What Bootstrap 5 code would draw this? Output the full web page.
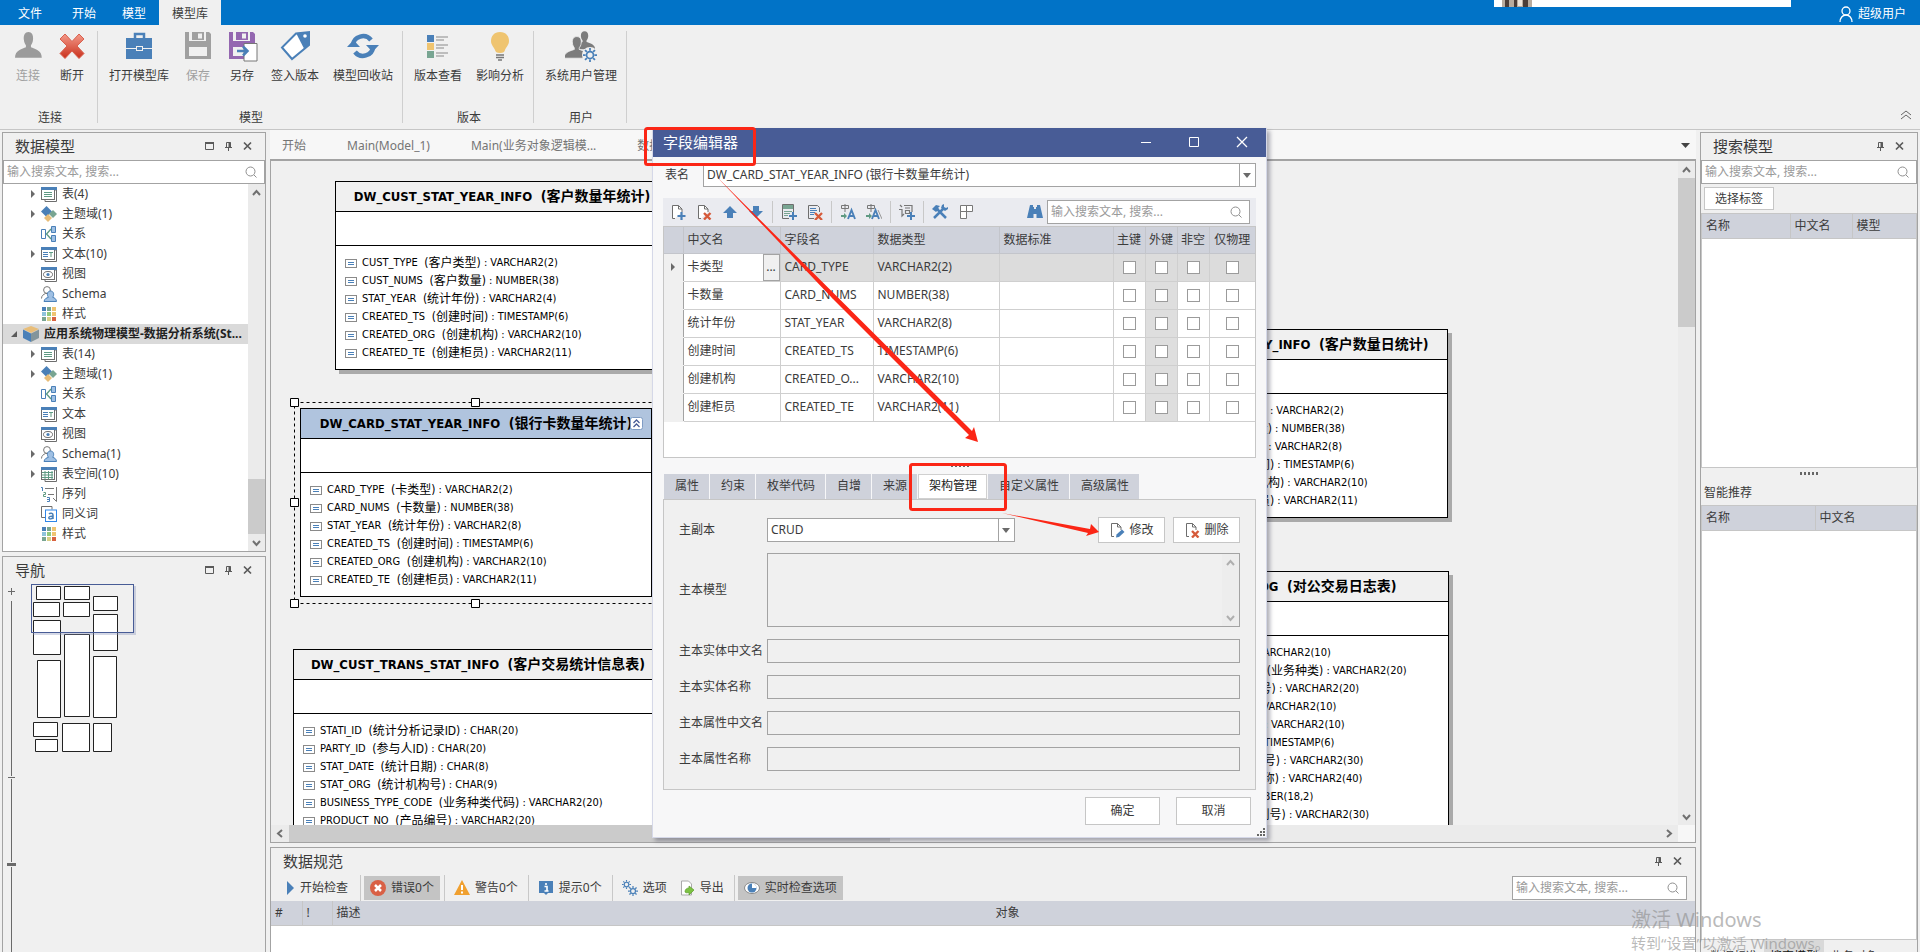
<!DOCTYPE html>
<html lang="zh-CN">
<head>
<meta charset="utf-8">
<meta name="viewport" content="width=device-width, initial-scale=1">
<title>字段编辑器</title>
<link href="https://cdn.jsdelivr.net/npm/bootstrap@5.3.0/dist/css/bootstrap.min.css" rel="stylesheet">
<style>
:root{--line:#a3a3a3;--soft:#c6c6c6;--head:#cfd2db;--face:#f0f0f0;--ink:#3b3b3b;--blue:#4a80b8;}
html,body{height:100%}
body{font-family:"Noto Sans","Noto Sans CJK SC",sans-serif;font-size:12px;line-height:18px;color:var(--ink);background:var(--face);overflow:hidden;position:relative}
button,input,select,textarea{font:inherit;color:inherit;border-radius:0}
svg{display:block;flex:none}
a{color:inherit;text-decoration:none}
.ico16{width:16px;height:16px}
/* title strip and ribbon */
.topbar{height:25px;background:#0173c7;color:#fff}
.topbar .menu-tab{padding:5px 13px 2px}
.topbar .menu-tab.active{background:var(--face);color:var(--ink)}
.menu-first{padding-left:18px!important;padding-right:17px!important}
.float-strip{left:1494px;top:0;width:297px;height:7px;background:#fff}
.topbar .account{padding:2px 14px 0 0}
.ribbon{height:105px;border-bottom:1px solid var(--soft)}
.rib-group{padding:0 3px 0 4px;position:relative}
.rib-group:first-child{padding:0 4px 0 6px}
.rib-group::after{content:"";position:absolute;right:0;top:6px;bottom:6px;width:1px;background:#cfcfcf}
.rib-btn{border:0;background:none;padding:5px 7px 0;min-width:44px;height:67px;white-space:nowrap;display:flex;flex-direction:column;align-items:center}
.rib-btn svg{width:32px;height:32px;margin:0 -1px 5px}
.rib-btn:disabled{color:#a0a0a0}
.rib-cap{text-align:center;padding-top:17px}
/* docked panels */
.side-left{width:264px}
.side-right{width:218px}
.dock{border:1px solid var(--line);background:var(--face)}
.dock-title{height:27px;font-size:15px;padding:0 12px 2px}
.dock-title svg{width:19px;height:12px}
.find{height:24px;border:1px solid var(--line);background:#fff;padding:0 7px 0 3px}
.find input{border:0;outline:0;background:none;min-width:0;flex:1;padding:0}
.find input::placeholder{color:#9a9a9a;opacity:1}
.tree{background:#fff;padding:0;margin:0;list-style:none;height:367px}
.tree li{height:20px;padding-left:21px;display:flex;align-items:center;white-space:nowrap;overflow:hidden}
.tree li .twist{width:14px;height:10px;margin-right:3px}
.tree li svg.ico16{margin-right:5px}
.tree li.root{background:#dadada;font-weight:700;padding-left:3px;color:#222}
.vbar{width:17px;background:#ebebeb;display:flex;flex-direction:column}
.vbar .arrow{width:17px;height:17px}
.thumb{background:#cbcbcb}
/* documents */
.doc-tabs{height:31px;background:#f7f7f7;border-bottom:2px solid var(--line);padding-right:4px;overflow:hidden}
.doc-tabs a{padding:7px 29px 0 12px;color:#757575;white-space:nowrap}
.canvas{border:1px solid var(--line);border-top:0}
.stage{position:relative;overflow:hidden;color:#000}
.entity{position:absolute;border:1px solid #000;background:#fff;box-shadow:4px 4px 0 #aaa;font-family:"DejaVu Sans Condensed","Noto Sans CJK SC",sans-serif;font-size:11px;white-space:nowrap}
.entity h6{font-family:"DejaVu Sans Condensed","Noto Sans CJK SC",sans-serif;margin:0;height:30px;line-height:29px;font-size:13px;font-weight:700;text-align:center;background:var(--face);border-bottom:1px solid #000}
.entity .keys{height:34px;border-bottom:1px solid #000}
.entity ul{list-style:none;margin:0;padding:8px 0 7px 9px}
.entity li{height:18px;line-height:18px;display:flex;align-items:center;white-space:pre}
.entity li::before{content:"";width:12px;height:9px;margin-right:5px;border:1px solid #8a8a8a;background:linear-gradient(#fff 2px,var(--blue) 2px 3px,#fff 3px 4px,var(--blue) 4px 5px,#fff 5px) center/6px 7px no-repeat #fff}
.entity h6 .cn{font-size:14px}
.entity li .cn{font-size:12px}
.entity.chosen{box-shadow:none}
.entity.chosen h6{background:#b0c4de}
.collapse-mark{position:absolute;right:8px;top:8px}
.hbar{height:17px;background:#ebebeb}
/* bottom panel */
.tool-sep{width:1px;align-self:stretch;background:#c8c8c8}
.rules .tool-sep{margin:0 3px 0 4px}
.chk{border:0;background:none;height:24px;padding:0 6px;display:flex;align-items:center;gap:5px;white-space:nowrap}
.chk.on{background:#c4c4c4}
table.plain{width:100%;table-layout:fixed;border-collapse:collapse}
table.plain th{font-weight:400;height:24px;padding:0 4px;background:var(--head);border-right:1px solid var(--soft);border-bottom:1px solid var(--soft)}
table.plain th:last-child{border-right:0}
table.plain th.open{border-right:0}
.list-box{background:#fff;border:1px solid var(--soft)}
.foot-tabs{height:12px;overflow:hidden;padding-left:3px}
.foot-tabs a{padding:8px 6px 0;white-space:nowrap}
.foot-tabs a.active{background:#d9d9d9;color:#111}
/* field editor window */
.editor{position:absolute;left:652px;top:128px;width:615px;background:#f7f7f8;border:1px solid #d5d8e8;border-top:0;box-shadow:3px 3px 4px rgba(60,60,80,.4)}
.editor-title{height:29px;background:#485c96;color:#fff;font-size:15px;padding:0 0 2px 10px}
.editor-title button{border:0;background:none;color:#fff;width:48px;height:27px;padding:0;display:flex;align-items:center;justify-content:center}
.editor-main{padding:6px 10px 12px}
.table-pick{margin-bottom:11px}
.pick{height:24px;border:1px solid var(--line);background:#fff;position:relative}
.pick select{appearance:none;border:0;outline:0;background:none;width:100%;height:22px;padding:0 20px 0 3px;display:block}
.pick::after{content:"";position:absolute;right:4px;top:9px;border:4px solid transparent;border-top:5px solid #6a6a6a;border-bottom:0}
.pick::before{content:"";position:absolute;right:15px;top:0;bottom:0;width:1px;background:var(--line)}
.editor-tools{height:28px;background:#eaebf0;padding:0 6px 0 2px}
.editor-tools button{border:0;background:none;padding:0;width:26px;height:28px;display:flex;align-items:center;justify-content:center}
.editor-tools .tool-sep{margin:3px 3px 3px}
.grid-box{border:1px solid var(--soft);background:#fff;padding-bottom:35px}
.fields{width:100%;table-layout:fixed;border-collapse:collapse}
.fields th,.fields td{height:28px;padding:0 4px;border:1px solid #cfcfcf;border-top:0;white-space:nowrap;overflow:hidden}
.fields th{height:26px;background:var(--head);font-weight:400;border-color:#c3c5cb}
.fields th:first-child,.fields td:first-child{border-left:0}
.fields th:last-child,.fields td:last-child{border-right:0}
.fields td:first-child{background:var(--face);border-bottom-color:var(--face);border-right-color:var(--line);padding:0}
.fields tr.now td:not(:first-child){background:#dcdcdc}
.fields tr.now td.edit{background:#fff!important}
.fields td:nth-child(7){background:#dedede}
.fields td:nth-child(n+6){text-align:center;padding:0}
.fields th:nth-child(n+6){padding:0;text-align:center}
.fields input{appearance:none;width:13px;height:13px;border:1px solid #9b9b9b;background:#fff;margin:0;display:inline-block;vertical-align:middle}
.more{border:1px solid var(--line);background:var(--face);width:17px;height:27px;padding:0;line-height:12px;margin-right:-4px}
.dots{width:18px;height:3px;background:repeating-linear-gradient(90deg,#666 0 2px,transparent 2px 4px)}
.pages{padding-left:1px}
.pages button{border:0;border-right:1px solid #f7f7f8;background:var(--head);height:25px;padding:0 10px 0 11px;margin:0}
.pages button.active{background:#fff;box-shadow:inset 0 0 0 1px #d0d0d0;color:#222}
.page-body{border:1px solid var(--soft);background:var(--face);padding:17px 15px 18px}
.form-line{margin-bottom:12px}
.form-line:first-child{margin-bottom:10px}
.form-line>label{width:88px;flex:none;white-space:nowrap}
.ro{height:24px;width:100%;border:1px solid var(--line);background:var(--face)}
.flat{border:1px solid var(--soft);background:#fff;padding:0;white-space:nowrap;display:inline-flex;align-items:center;justify-content:center}
.notes{position:absolute;left:0;top:0;pointer-events:none}
.watermark{position:absolute;left:1631px;top:906px;color:rgba(140,140,140,.6);pointer-events:none;white-space:nowrap}
.watermark div:first-child{font-size:20px;line-height:28px}
.watermark div:last-child{font-size:15px;line-height:18px}
</style>
</head>
<body class="d-flex flex-column">

<svg width="0" height="0" class="position-absolute" aria-hidden="true">
<defs>
<symbol id="i-lens" viewBox="0 0 12 12"><circle cx="5.5" cy="5.5" r="4.5" fill="none" stroke="#8f8f8f"/><path d="M9 9l2.500 2.500" stroke="#8f8f8f"/></symbol>
<symbol id="i-max" viewBox="0 0 19 12"><path d="M5.500 2.500h8v7h-8z" fill="none" stroke="#5a5a5a"/><path d="M5 3h9" stroke="#5a5a5a" stroke-width="2"/></symbol>
<symbol id="i-pin" viewBox="0 0 19 12"><path d="M7.500 2.500h4v5h-4zM6 7.500h7M9.500 8v3" fill="none" stroke="#5a5a5a"/><path d="M10.500 2v5" stroke="#5a5a5a" stroke-width="2"/></symbol>
<symbol id="i-x" viewBox="0 0 19 12"><path d="M6 2.500l7 7M13 2.500l-7 7" stroke="#5a5a5a" stroke-width="1.700"/></symbol>
<symbol id="i-tri" viewBox="0 0 14 10"><path d="M7 1l4 4-4 4z" fill="#6a6a6a"/></symbol>
<symbol id="i-open" viewBox="0 0 14 10"><path d="M11 2v6H5z" fill="#5a5a5a"/></symbol>
<symbol id="a-up" viewBox="0 0 17 17"><path d="M5 11l3.500-4 3.500 4" fill="none" stroke="#707070" stroke-width="2"/></symbol>
<symbol id="a-dn" viewBox="0 0 17 17"><path d="M5 7l3.500 4L12 7" fill="none" stroke="#707070" stroke-width="2"/></symbol>
<symbol id="i-win" viewBox="0 0 16 16"><path d="M13.500 4h2v11.500h-11.500v-2" fill="none" stroke="#6e6e6e"/><rect x=".5" y="2.500" width="13" height="11" fill="#fff" stroke="#6e6e6e"/><path d="M0 1h14v3H0zM13 1h3v3h-3z" fill="#4a80b8"/></symbol>
<symbol id="i-table" viewBox="0 0 16 16"><use href="#i-win"/><path d="M3 6.500h8M3 8.500h8M3 10.500h8" stroke="#5f9a83"/></symbol>
<symbol id="i-text" viewBox="0 0 16 16"><use href="#i-win"/><path d="M2 6.500h5M2 8.500h5M2 10.500h5" stroke="#4a80b8"/><path d="M8 6.500h4M10 6.500V11" stroke="#5f9a83"/></symbol>
<symbol id="i-view" viewBox="0 0 16 16"><use href="#i-win"/><ellipse cx="7" cy="8.500" rx="4.500" ry="3" fill="none" stroke="#6e6e6e"/><circle cx="7" cy="8.500" r="1.600" fill="#4a80b8"/></symbol>
<symbol id="i-space" viewBox="0 0 16 16"><use href="#i-win"/><path d="M1 6.500h11M1 9h11M1 11.500h11M4 5v8.500M7.500 5v8.500M11 5v8.500" stroke="#5f9a83"/></symbol>
<symbol id="i-area" viewBox="0 0 16 16"><path d="M5.500 0l5.500 5.500-5.500 5.500L0 5.500z" fill="#4a80b8"/><path d="M12 4l4 4-4 4-4-4z" fill="#78a592"/><path d="M7 8l4 4-4 4-4-4z" fill="#e8bd78"/></symbol>
<symbol id="i-rel" viewBox="0 0 16 16"><path d="M.5 3.500h4v9h-4z" fill="#fff" stroke="#4a80b8"/><path d="M10.500.5h4v6h-4zM10.500 9.500h4v6h-4z" fill="#9fc0e4" stroke="#4a80b8"/><path d="M10 3L5.500 8l4.500 5" fill="none" stroke="#5f9a83" stroke-width="1.400"/></symbol>
<symbol id="i-user" viewBox="0 0 16 16"><circle cx="6" cy="4" r="3.400" fill="#fff" stroke="#777"/><path d="M.5 12.500c0-3 2-4 4-5h3" fill="none" stroke="#777"/><path d="M3 15.500c.5-3 2.500-3.500 4.500-4.200-2-2.200-1.300-6.300 2-6.300s4 4 2.200 6.300c2 .7 3.600 1.500 3.800 4.200z" fill="#9fc0e4" stroke="#4a80b8"/></symbol>
<symbol id="i-style" viewBox="0 0 16 16"><path d="M1 1h4v4H1z" fill="#4a80b8"/><path d="M6 1h4v4H6z" fill="#78a592"/><path d="M11 1h4v4h-4z" fill="#efc470"/><path d="M1 6h4v4H1z" fill="#8fc3dc"/><path d="M6 6h4v4H6z" fill="#8fc97f"/><path d="M11 6h4v4h-4z" fill="#efc470"/><path d="M1 11h4v4H1z" fill="#78a592"/><path d="M6 11h4v4H6z" fill="#d8cf86"/><path d="M11 11h4v4h-4z" fill="#d9623f"/></symbol>
<symbol id="i-cube" viewBox="0 0 16 16"><path d="M8 0l8 3-8 4-8-4z" fill="#e8bd78"/><path d="M0 3.500l8 4V16l-8-4z" fill="#4a80b8"/><path d="M16 3.500l-8 4V16l8-4z" fill="#83959b"/></symbol>
<symbol id="i-syn" viewBox="0 0 16 16"><path d="M4 11.500H.5V.5H11v3" fill="none" stroke="#6e6e6e"/><rect x="4.500" y="4" width="11" height="11.500" fill="#fff" stroke="#2f86e8"/><path d="M8 8c1-1.200 4-1 4 1v4M12 10.500c-3-.5-4.500.3-4.200 1.500s3 1.300 4.200-.5" fill="none" stroke="#4a80b8" stroke-width="1.500"/></symbol>
<symbol id="i-seq" viewBox="0 0 16 16"><path d="M0 1.500h1.500V5" fill="none" stroke="#4a80b8"/><path d="M2.500 6.500h2v2h-2v2h2.500" fill="none" stroke="#5f9a83"/><path d="M6 11.500h2.500v4H6M6 13.500h2.500" fill="none" stroke="#4a80b8"/><path d="M4 2.500h9M7 8.500h6M15.500 1v14.500L12 12" fill="none" stroke="#777"/></symbol>
<symbol id="i-page" viewBox="0 0 16 16"><path d="M5 14.500H2.500v-13h6l3.500 3.500V8" fill="#fff" stroke="#6e6e6e"/><path d="M8.500 1.500V5H12" fill="none" stroke="#6e6e6e"/></symbol>
<symbol id="i-add" viewBox="0 0 16 16"><use href="#i-page"/><path d="M11.500 8v8M7.500 12h8" stroke="#4a80b8" stroke-width="2.200"/></symbol>
<symbol id="i-del" viewBox="0 0 16 16"><use href="#i-page"/><path d="M8 9l6.500 6.500M14.500 9L8 15.500" stroke="#d65a3a" stroke-width="2.400"/></symbol>
<symbol id="i-edit" viewBox="0 0 16 16"><use href="#i-page"/><path d="M7 15.500l.5-3L13 7.500l2.500 2.500-5.500 5z" fill="#4a80b8"/></symbol>
<symbol id="i-person" viewBox="0 0 32 32"><path d="M16 2c4 0 6 3 5.500 8-.3 3-1.500 5-2.500 6v2c4 1.500 13 3 13 11H0c0-8 9-9.500 13-11v-2c-1-1-2.200-3-2.500-6C10 5 12 2 16 2z"/></symbol>
<symbol id="i-gear" viewBox="0 0 16 16"><circle cx="8" cy="8" r="4" fill="none" stroke="#4a80b8" stroke-width="2"/><path d="M8 0v3M8 13v3M0 8h3M13 8h3M2.300 2.300l2.200 2.200M11.500 11.500l2.200 2.200M13.700 2.300l-2.200 2.200M4.500 11.500l-2.200 2.200" stroke="#4a80b8" stroke-width="2"/></symbol>
<symbol id="i-disk" viewBox="0 0 32 32"><path d="M3 2h4v9h17V2h3l2 2v25H3z M7 17v9h18V17z" fill-rule="evenodd"/><path d="M10 2h12v8H10z M16 3.500v5h4v-5z" fill-rule="evenodd"/></symbol>
</defs>
</svg>

<header>
  <nav class="topbar d-flex position-relative">
    <a href="#" class="menu-tab menu-first">文件</a>
    <a href="#" class="menu-tab">开始</a>
    <a href="#" class="menu-tab">模型</a>
    <a href="#" class="menu-tab active">模型库</a>
    <div class="float-strip position-absolute"><svg width="30" height="7" class="ms-2"><path d="M0 0h30v7H0z" fill="#b9ac9f"/><path d="M3 0h4v7H3zM12 0h3v7h-3zM21 0h5v7h-5z" fill="#4b3d38"/><path d="M16 0h4v6h-4z" fill="#eee4da"/></svg></div>
    <a href="#" class="account ms-auto d-flex align-items-center gap-1"><svg width="16" height="18" viewBox="0 0 16 18" fill="none" stroke="#fff" stroke-width="1.300"><circle cx="8" cy="6" r="4"/><path d="M2 17c0-4 2.500-7 6-7s6 3 6 7"/></svg>超级用户</a>
  </nav>
  <div class="ribbon d-flex position-relative">
    <div class="rib-group">
      <div class="d-flex">
        <button class="rib-btn" disabled><svg fill="#9b9b9b"><use href="#i-person" transform="translate(3 0) scale(.84 .96)"/></svg>连接</button>
        <button class="rib-btn"><svg viewBox="0 0 32 32"><defs><linearGradient id="rx" x2="0" y2="1"><stop stop-color="#f49a8a"/><stop offset="1" stop-color="#c9301c"/></linearGradient></defs><path d="M9 4l7 7.500L23 4l5 5-7 7 7 7.500-5 5-7-7.500-7 7.500-5-5 7-7.500-7-7z" fill="url(#rx)" stroke="#d8604e"/></svg>断开</button>
      </div>
      <div class="rib-cap">连接</div>
    </div>
    <div class="rib-group">
      <div class="d-flex">
        <button class="rib-btn"><svg viewBox="0 0 32 32"><path d="M12 9V4h9v5" fill="none" stroke="#4a80b8" stroke-width="2.500"/><path d="M3 8h26v10h-9v-2h-7v2H3zM3 19h10v2h7v-2h9v10H3zM14 17h5v3h-5z" fill="#4a80b8"/></svg>打开模型库</button>
        <button class="rib-btn" disabled><svg viewBox="0 0 32 32" fill="#a0a0a0"><use href="#i-disk"/></svg>保存</button>
        <button class="rib-btn"><svg viewBox="0 0 32 32" fill="#9467b0"><use href="#i-disk"/><path d="M18 13.500h13V31H18z" fill="#fff" stroke="#777"/><path d="M11 21h10M17 16.500l4.500 4.500-4.500 4.500" fill="none" stroke="#4a80b8" stroke-width="2.500"/></svg>另存</button>
        <button class="rib-btn"><svg viewBox="0 0 32 32"><path d="M17 3.500L30 2v13L13 29 3 17.500z" fill="#fff" stroke="#4a80b8" stroke-width="2"/><path d="M17 3l13-1v13l-5 3.500z" fill="#4a80b8"/><circle cx="26" cy="6" r="1.800" fill="#fff"/></svg>签入版本</button>
        <button class="rib-btn"><svg viewBox="0 0 32 32"><path d="M6 15A10 9.500 0 0 1 24 10M26 17A10 9.500 0 0 1 8 22" fill="none" stroke="#4a80b8" stroke-width="4.500"/><path d="M0 17h13l-6.500-7zM19 15h13l-6.500 7z" fill="#4a80b8"/></svg>模型回收站</button>
      </div>
      <div class="rib-cap">模型</div>
    </div>
    <div class="rib-group">
      <div class="d-flex">
        <button class="rib-btn"><svg viewBox="0 0 32 32"><path d="M5 5h7v7H5z" fill="#4a80b8"/><path d="M5 13h7v7H5z" fill="#efc470"/><path d="M5 21h7v7H5z" fill="#78a592"/><path d="M14 7h12M14 10h8M14 15h12M14 18h8M14 23h12M14 26h8" stroke="#8a8a8a"/></svg>版本查看</button>
        <button class="rib-btn"><svg viewBox="0 0 32 32"><path d="M16 2c6 0 9 4 9 9 0 4-3 6-4 9-.5 2-1.500 3-5 3s-4.500-1-5-3c-1-3-4-5-4-9 0-5 3-9 9-9z" fill="#efc470"/><path d="M12 25h8M12 27.500h8M14 30h4" stroke="#777" stroke-width="1.300"/></svg>影响分析</button>
      </div>
      <div class="rib-cap">版本</div>
    </div>
    <div class="rib-group">
      <div class="d-flex justify-content-center">
        <button class="rib-btn"><svg viewBox="0 0 32 32"><use href="#i-person" fill="#7c7c7c" transform="translate(9 0) scale(.66)"/><use href="#i-person" fill="#7c7c7c" stroke="#f0f0f0" transform="translate(-1 5) scale(.8)"/><circle cx="25" cy="25" r="8" fill="#f0f0f0"/><use href="#i-gear" x="18" y="18" width="14" height="14"/></svg>系统用户管理</button>
      </div>
      <div class="rib-cap">用户</div>
    </div>
    <svg class="ms-auto align-self-end mb-2 me-2" width="12" height="12" fill="none" stroke="#666"><path d="M1 6l5-4 5 4M1 10l5-4 5 4"/></svg>
  </div>
</header>

<main class="d-flex flex-fill" style="min-height:0;padding:0 2px">
  <aside class="side-left d-flex flex-column flex-shrink-0" style="padding-top:2px">
    <section class="dock">
      <div class="dock-title d-flex align-items-center pe-2"><span class="me-auto">数据模型</span><svg><use href="#i-max"/></svg><svg><use href="#i-pin"/></svg><svg><use href="#i-x"/></svg></div>
      <div class="find d-flex align-items-center"><input aria-label="搜索数据模型" placeholder="输入搜索文本, 搜索..."><svg width="12" height="12"><use href="#i-lens"/></svg></div>
      <div class="d-flex bg-white">
        <ul class="tree flex-fill" style="min-width:0">
          <li><svg class="twist"><use href="#i-tri"/></svg><svg class="ico16"><use href="#i-table"/></svg>表(4)</li>
          <li><svg class="twist"><use href="#i-tri"/></svg><svg class="ico16"><use href="#i-area"/></svg>主题域(1)</li>
          <li><svg class="twist"></svg><svg class="ico16"><use href="#i-rel"/></svg>关系</li>
          <li><svg class="twist"><use href="#i-tri"/></svg><svg class="ico16"><use href="#i-text"/></svg>文本(10)</li>
          <li><svg class="twist"></svg><svg class="ico16"><use href="#i-view"/></svg>视图</li>
          <li><svg class="twist"></svg><svg class="ico16"><use href="#i-user"/></svg>Schema</li>
          <li><svg class="twist"></svg><svg class="ico16"><use href="#i-style"/></svg>样式</li>
          <li class="root"><svg class="twist"><use href="#i-open"/></svg><svg class="ico16"><use href="#i-cube"/></svg>应用系统物理模型-数据分析系统(St...</li>
          <li><svg class="twist"><use href="#i-tri"/></svg><svg class="ico16"><use href="#i-table"/></svg>表(14)</li>
          <li><svg class="twist"><use href="#i-tri"/></svg><svg class="ico16"><use href="#i-area"/></svg>主题域(1)</li>
          <li><svg class="twist"></svg><svg class="ico16"><use href="#i-rel"/></svg>关系</li>
          <li><svg class="twist"></svg><svg class="ico16"><use href="#i-text"/></svg>文本</li>
          <li><svg class="twist"></svg><svg class="ico16"><use href="#i-view"/></svg>视图</li>
          <li><svg class="twist"><use href="#i-tri"/></svg><svg class="ico16"><use href="#i-user"/></svg>Schema(1)</li>
          <li><svg class="twist"><use href="#i-tri"/></svg><svg class="ico16"><use href="#i-space"/></svg>表空间(10)</li>
          <li><svg class="twist"></svg><svg class="ico16"><use href="#i-seq"/></svg>序列</li>
          <li><svg class="twist"></svg><svg class="ico16"><use href="#i-syn"/></svg>同义词</li>
          <li><svg class="twist"></svg><svg class="ico16"><use href="#i-style"/></svg>样式</li>
        </ul>
        <div class="vbar"><svg class="arrow"><use href="#a-up"/></svg><div class="thumb mt-auto" style="height:55px"></div><svg class="arrow"><use href="#a-dn"/></svg></div>
      </div>
    </section>
    <section class="dock flex-fill border-bottom-0 mt-1 overflow-hidden" style="min-height:0">
      <div class="dock-title d-flex align-items-center pe-2"><span class="me-auto">导航</span><svg><use href="#i-max"/></svg><svg><use href="#i-pin"/></svg><svg><use href="#i-x"/></svg></div>
      <svg width="200" height="370" viewBox="3 584 200 370" fill="none" role="img" aria-label="导航缩略图">
        <path d="M11.500 588v7M8 591.500h7M11.500 601v175M8 777.500h7M11.500 779v83M11.500 867v88" stroke="#6a6a6a"/><path d="M7 863h9v3H7z" fill="#6a6a6a"/>
        <g fill="#fff" stroke="#222"><path d="M36.500 586.500h24v13h-24zM64.500 586.500h25v13h-25zM93.500 596.500h24v14h-24zM33.500 602.500h26v14h-26zM63.500 602.500h26v14h-26zM33.500 620.500h27v34h-27zM93.500 614.500h24v36h-24zM64.500 634.500h25v82h-25zM37.500 660.500h23v57h-23zM93.500 656.500h23v61h-23zM33.500 722.500h24v14h-24zM35.500 739.500h22v12h-22zM62.500 723.500h27v28h-27zM93.500 723.500h18v28h-18z"/></g>
        <path d="M135 586v48H33" stroke="#8590b8" stroke-opacity=".35" stroke-width="2"/><rect x="31.500" y="584.500" width="102" height="48" stroke="#485c96"/>
      </svg>
    </section>
  </aside>

  <div class="d-flex flex-column flex-fill ms-1" style="min-width:0">
    <nav class="doc-tabs d-flex">
      <a href="#">开始</a><a href="#">Main(Model_1)</a><a href="#">Main(业务对象逻辑模...</a><a href="#">数据</a>
      <svg class="ms-auto mt-2" width="12" height="14"><path d="M1 5h9l-4.500 5z" fill="#444"/></svg>
    </nav>
    <div class="canvas">
      <div class="d-flex">
        <div class="stage flex-fill" id="stage" style="height:664px">
          <svg class="position-absolute" style="left:18px;top:236px" width="374" height="212"><rect x="5.500" y="5.500" width="363" height="201" fill="none" stroke="#000" stroke-dasharray="3 3"/><path d="M1.500 1.500h8v8h-8zM182.500 1.500h8v8h-8zM364.500 1.500h8v8h-8zM1.500 101.500h8v8h-8zM1.500 202.500h8v8h-8zM182.500 202.500h8v8h-8z" fill="#fff" stroke="#000"/></svg>
        </div>
        <div class="vbar"><svg class="arrow"><use href="#a-up"/></svg><div class="thumb" style="height:149px"></div><svg class="arrow mt-auto"><use href="#a-dn"/></svg></div>
      </div>
      <div class="hbar d-flex"><svg width="18" height="17"><path d="M11 5L7 8.500l4 3.500" fill="none" stroke="#707070" stroke-width="2"/></svg><div class="thumb" style="width:601px"></div><svg class="ms-auto" width="17" height="17"><path d="M6 5l4 3.500L6 12" fill="none" stroke="#707070" stroke-width="2"/></svg><div style="width:17px;background:#f7f7f7"></div></div>
    </div>
    <section class="dock flex-fill d-flex flex-column border-bottom-0 mt-1 overflow-hidden" style="min-height:0">
      <div class="dock-title d-flex align-items-center pe-2"><span class="me-auto">数据规范</span><svg><use href="#i-pin"/></svg><svg><use href="#i-x"/></svg></div>
      <div class="rules d-flex align-items-center pe-2" style="height:26px">
        <button class="chk ps-3 pe-2"><svg width="8" height="14"><path d="M0 0l7 7-7 7z" fill="#4a80b8"/></svg>开始检查</button>
        <span class="tool-sep"></span>
        <button class="chk on"><svg class="ico16"><circle cx="8" cy="8" r="8" fill="#d96045"/><path d="M5 5l6 6M11 5l-6 6" stroke="#fff" stroke-width="2.500"/></svg>错误0个</button>
        <span class="tool-sep"></span>
        <button class="chk"><svg class="ico16"><path d="M8 0l8 15H0z" fill="#f0a030"/><path d="M8 5v5M8 11.500v2" stroke="#fff" stroke-width="2"/></svg>警告0个</button>
        <span class="tool-sep"></span>
        <button class="chk"><svg class="ico16"><path d="M1 1h14v12h-5l-2 2-2-2H1z" fill="#4a80b8"/><path d="M6.500 6.500H9V11M6.500 11h4M8 3v2" fill="none" stroke="#fff" stroke-width="1.600"/></svg>提示0个</button>
        <span class="tool-sep"></span>
        <button class="chk"><svg class="ico16"><use href="#i-gear" width="9" height="9"/><use href="#i-gear" x="6" y="6" width="10" height="10"/></svg>选项</button>
        <button class="chk"><svg class="ico16"><path d="M2.500 1h7l3 3v11h-10z" fill="#fff" stroke="#aaa"/><path d="M6 12c0-3 2-4 4-4V6l5 4-5 5v-2.500c-2 0-2 1-4-.5z" fill="#7cc242" stroke="#5b9c2b" stroke-width=".7"/></svg>导出</button>
        <span class="tool-sep"></span>
        <button class="chk on"><svg class="ico16"><ellipse cx="8" cy="8" rx="7.500" ry="5.500" fill="#fff" stroke="#888"/><circle cx="8" cy="8" r="4.500" fill="#4a80b8"/><path d="M8 8V3.500A4.500 4.500 0 0 1 12.500 8z" fill="#fff"/></svg>实时检查选项</button>
        <div class="find d-flex align-items-center ms-auto" style="width:175px"><input aria-label="搜索规范" placeholder="输入搜索文本, 搜索..."><svg width="12" height="12"><use href="#i-lens"/></svg></div>
      </div>
      <div class="bg-white flex-fill"><table class="plain"><colgroup><col style="width:31px"><col style="width:30px"><col><col style="width:49.4%"></colgroup><thead><tr><th>#</th><th>!</th><th class="open">描述</th><th>对象</th></tr></thead></table></div>
    </section>
  </div>

  <aside class="side-right d-flex flex-column flex-shrink-0 ms-1" style="padding-top:2px">
    <section class="dock flex-fill d-flex flex-column border-bottom-0 overflow-hidden" style="min-height:0">
      <div class="dock-title d-flex align-items-center pe-2"><span class="me-auto">搜索模型</span><svg><use href="#i-pin"/></svg><svg><use href="#i-x"/></svg></div>
      <div class="find d-flex align-items-center"><input aria-label="搜索模型" placeholder="输入搜索文本, 搜索..."><svg width="12" height="12"><use href="#i-lens"/></svg></div>
      <div style="padding:3px 3px"><button class="flat" style="width:70px;height:23px">选择标签</button></div>
      <div class="list-box" style="height:255px"><table class="plain"><colgroup><col style="width:88px"><col style="width:62px"><col></colgroup><thead><tr><th>名称</th><th>中文名</th><th>模型</th></tr></thead></table></div>
      <div class="dots mx-auto mt-1 flex-shrink-0"></div>
      <div style="padding:9px 3px 3px">智能推荐</div>
      <div class="list-box flex-fill"><table class="plain"><colgroup><col style="width:113px"><col></colgroup><thead><tr><th>名称</th><th>中文名</th></tr></thead></table></div>
      <nav class="foot-tabs d-flex"><a href="#">数据标准</a><a href="#" class="active">搜索模型</a><a href="#">业务对象</a></nav>
    </section>
  </aside>
</main>

<div class="editor" role="dialog" aria-label="字段编辑器">
  <div class="editor-title d-flex align-items-center"><span class="me-auto">字段编辑器</span>
    <button aria-label="最小化"><svg width="12" height="12"><path d="M1 6.500h10" stroke="#fff"/></svg></button>
    <button aria-label="最大化"><svg width="12" height="12"><path d="M1.500 1.500h9v9h-9z" fill="none" stroke="#fff"/></svg></button>
    <button aria-label="关闭"><svg width="12" height="12"><path d="M1 1l10 10M11 1L1 11" stroke="#fff" stroke-width="1.300"/></svg></button>
  </div>
  <div class="editor-main">
    <div class="table-pick d-flex align-items-center"><label for="tbl" style="width:40px;padding-left:2px">表名</label><div class="pick flex-fill"><select id="tbl"><option>DW_CARD_STAT_YEAR_INFO (银行卡数量年统计)</option></select></div></div>
    <div class="editor-tools d-flex align-items-center">
      <button aria-label="新增"><svg class="ico16"><use href="#i-add"/></svg></button>
      <button aria-label="删除字段"><svg class="ico16"><use href="#i-del"/></svg></button>
      <button aria-label="上移"><svg class="ico16"><path d="M8 2l7 7h-4v5H5V9H1z" fill="#4a80b8"/></svg></button>
      <button aria-label="下移"><svg class="ico16"><path d="M8 14l7-7h-4V2H5v5H1z" fill="#4a80b8"/></svg></button>
      <span class="tool-sep"></span>
      <button aria-label="插入"><svg class="ico16"><path d="M1.500.500h11V9M8 14.500H1.500V.500" fill="none" stroke="#6e6e6e"/><path d="M2 1h10v4H2z" fill="#78a592"/><path d="M3 7.500h8M3 9.500h6M3 11.500h4" stroke="#78a592"/><path d="M12 8v8M8 12h8" stroke="#4a80b8" stroke-width="2"/></svg></button>
      <button aria-label="清除"><svg class="ico16"><path d="M1.500 1.500h9l2 2V8M7 14.500H1.500v-13" fill="none" stroke="#6e6e6e"/><path d="M3 4.500h6M3 6.500h7M3 8.500h5M3 10.500h4" stroke="#4a80b8"/><path d="M8 9l7 7M15 9l-7 7" stroke="#d65a3a" stroke-width="2.300"/></svg></button>
      <span class="tool-sep"></span>
      <button aria-label="中文转英文"><svg class="ico16"><path d="M1.500 1.500h7v3h-7zM5 0v8" fill="none" stroke="#777"/><path d="M1 11h3V9l3 3-3 3v-2H1z" fill="#5f9a83"/><path d="M8 15l3.500-9L15 15M9.500 12h4" fill="none" stroke="#4a80b8" stroke-width="1.900"/></svg></button>
      <button aria-label="批量翻译"><svg class="ico16"><path d="M1.500 1.500h7v3h-7zM5 0v8" fill="none" stroke="#777"/><path d="M0 11h3V9l3 3-3 3v-2H0z" fill="#5f9a83"/><path d="M12 6l4 9" stroke="#999"/><path d="M6 15l3.500-9L13 15M7.500 12h4" fill="none" stroke="#4a80b8" stroke-width="1.900"/></svg></button>
      <span class="tool-sep"></span>
      <button aria-label="词库"><svg class="ico16"><path d="M1 1l2 2M0 5.500h3V12l2-2M5 1.500h8V8M6 4h5M6.500 6.500h4v3h-4z" fill="none" stroke="#777" stroke-width="1.200"/><path d="M12 8v8M8 12h8" stroke="#4a80b8" stroke-width="2"/></svg></button>
      <span class="tool-sep"></span>
      <button aria-label="工具"><svg class="ico16"><path d="M2 14L12 4M5 5l9 9" stroke="#4a80b8" stroke-width="2.500"/><path d="M0 5l4-4 4 1-2 2 1 1-3 3zM10 1l2-1v3l2 1 2-1v2l-3 2-4-3z" fill="#4a80b8"/></svg></button>
      <button aria-label="布局"><svg class="ico16"><path d="M2.500 1.500h6v6h-6zM8.500 1.500h6v6h-6zM2.500 7.500h6v7h-6z" fill="#fff" stroke="#777"/></svg></button>
      <svg class="ico16 ms-auto me-1" viewBox="0 0 16 16"><path d="M3 1h3v2h1v2h2V3h1V1h3l3 13H9.500v-4h-3v4H0z" fill="#4a80b8"/></svg>
      <div class="find d-flex align-items-center" style="width:203px"><input aria-label="搜索字段" placeholder="输入搜索文本, 搜索..."><svg width="12" height="12"><use href="#i-lens"/></svg></div>
    </div>
    <div class="grid-box">
      <table class="fields">
        <colgroup><col style="width:19px"><col style="width:97px"><col style="width:93px"><col style="width:126px"><col style="width:114px"><col style="width:32px"><col style="width:32px"><col style="width:32px"><col></colgroup>
        <thead><tr><th></th><th>中文名</th><th>字段名</th><th>数据类型</th><th>数据标准</th><th>主键</th><th>外键</th><th>非空</th><th>仅物理</th></tr></thead>
        <tbody>
        <tr class="now"><td><svg width="18" height="10"><use href="#i-tri" width="14" height="10"/></svg></td><td class="edit"><div class="d-flex align-items-center">卡类型<button class="more ms-auto">...</button></div></td><td>CARD_TYPE</td><td>VARCHAR2(2)</td><td></td><td><input type="checkbox" aria-label="主键"></td><td><input type="checkbox" aria-label="外键"></td><td><input type="checkbox" aria-label="非空"></td><td><input type="checkbox" aria-label="仅物理"></td></tr>
        <tr><td></td><td>卡数量</td><td>CARD_NUMS</td><td>NUMBER(38)</td><td></td><td><input type="checkbox" aria-label="主键"></td><td><input type="checkbox" aria-label="外键"></td><td><input type="checkbox" aria-label="非空"></td><td><input type="checkbox" aria-label="仅物理"></td></tr>
        <tr><td></td><td>统计年份</td><td>STAT_YEAR</td><td>VARCHAR2(8)</td><td></td><td><input type="checkbox" aria-label="主键"></td><td><input type="checkbox" aria-label="外键"></td><td><input type="checkbox" aria-label="非空"></td><td><input type="checkbox" aria-label="仅物理"></td></tr>
        <tr><td></td><td>创建时间</td><td>CREATED_TS</td><td>TIMESTAMP(6)</td><td></td><td><input type="checkbox" aria-label="主键"></td><td><input type="checkbox" aria-label="外键"></td><td><input type="checkbox" aria-label="非空"></td><td><input type="checkbox" aria-label="仅物理"></td></tr>
        <tr><td></td><td>创建机构</td><td>CREATED_O...</td><td>VARCHAR2(10)</td><td></td><td><input type="checkbox" aria-label="主键"></td><td><input type="checkbox" aria-label="外键"></td><td><input type="checkbox" aria-label="非空"></td><td><input type="checkbox" aria-label="仅物理"></td></tr>
        <tr><td></td><td>创建柜员</td><td>CREATED_TE</td><td>VARCHAR2(11)</td><td></td><td><input type="checkbox" aria-label="主键"></td><td><input type="checkbox" aria-label="外键"></td><td><input type="checkbox" aria-label="非空"></td><td><input type="checkbox" aria-label="仅物理"></td></tr>
        </tbody>
      </table>
    </div>
    <div class="d-flex justify-content-center align-items-center" style="height:16px"><div class="dots"></div></div>
    <div class="pages d-flex" role="tablist"><button role="tab">属性</button><button role="tab">约束</button><button role="tab">枚举代码</button><button role="tab">自增</button><button role="tab">来源</button><button role="tab" class="active">架构管理</button><button role="tab">自定义属性</button><button role="tab">高级属性</button></div>
    <div class="page-body">
      <div class="form-line d-flex align-items-center"><label for="rep">主副本</label><div class="pick" style="width:248px"><select id="rep"><option>CRUD</option></select></div>
        <button class="flat ms-auto gap-1" style="width:67px;height:26px"><svg class="ico16"><use href="#i-edit"/></svg>修改</button><button class="flat ms-2 gap-1" style="width:67px;height:26px"><svg class="ico16"><use href="#i-del"/></svg>删除</button></div>
      <div class="form-line d-flex align-items-center"><label for="mm">主本模型</label><div class="flex-fill d-flex position-relative"><textarea id="mm" class="ro" readonly style="height:74px;resize:none"></textarea><div class="vbar position-absolute end-0 top-0 bottom-0 justify-content-between opacity-50" style="margin:1px"><svg class="arrow"><use href="#a-up"/></svg><svg class="arrow"><use href="#a-dn"/></svg></div></div></div>
      <div class="form-line d-flex align-items-center"><label for="f1">主本实体中文名</label><input id="f1" class="ro" readonly></div>
      <div class="form-line d-flex align-items-center"><label for="f2">主本实体名称</label><input id="f2" class="ro" readonly></div>
      <div class="form-line d-flex align-items-center"><label for="f3">主本属性中文名</label><input id="f3" class="ro" readonly></div>
      <div class="form-line d-flex align-items-center mb-0"><label for="f4">主本属性名称</label><input id="f4" class="ro" readonly></div>
    </div>
    <div class="d-flex justify-content-end gap-3" style="padding:7px 5px 0 0"><button class="flat" style="width:75px;height:28px">确定</button><button class="flat" style="width:75px;height:28px">取消</button></div>
  </div>
  <svg class="position-absolute end-0 bottom-0" width="9" height="9" fill="#666"><path d="M6 0h2v2H6zM3 3h2v2H3zM6 3h2v2H6zM0 6h2v2H0zM3 6h2v2H3zM6 6h2v2H6z"/></svg>
</div>

<svg class="notes" width="1300" height="700" aria-hidden="true"><g fill="none" stroke="#fb2616" stroke-width="3"><rect x="645.500" y="128.500" width="109" height="36" rx="2"/><rect x="910.500" y="464.500" width="95" height="45" rx="2"/></g><g fill="#fb2616"><path d="M716 176L972 431l2-4 4 15-13-4 4-3L834 300z"/><path d="M1002 513l88 16 1-5 8 8-13 4 2-3z"/></g></svg>
<div class="watermark"><div>激活 Windows</div><div>转到“设置”以激活 Windows。</div></div>

<script src="https://cdn.jsdelivr.net/npm/bootstrap@5.3.0/dist/js/bootstrap.bundle.min.js"></script>
<script>
// Tables placed on the model diagram: position, width, physical name, Chinese name, columns.
const created = [["CREATED_TS","创建时间","TIMESTAMP(6)"],["CREATED_ORG","创建机构","VARCHAR2(10)"],["CREATED_TE","创建柜员","VARCHAR2(11)"]];
const entities = [
  {x:64,y:20,w:334,name:"DW_CUST_STAT_YEAR_INFO",cn:"客户数量年统计",cols:[["CUST_TYPE","客户类型","VARCHAR2(2)"],["CUST_NUMS","客户数量","NUMBER(38)"],["STAT_YEAR","统计年份","VARCHAR2(4)"],...created]},
  {x:29,y:247,w:352,chosen:true,name:"DW_CARD_STAT_YEAR_INFO",cn:"银行卡数量年统计",cols:[["CARD_TYPE","卡类型","VARCHAR2(2)"],["CARD_NUMS","卡数量","NUMBER(38)"],["STAT_YEAR","统计年份","VARCHAR2(8)"],...created]},
  {x:22,y:488,w:370,name:"DW_CUST_TRANS_STAT_INFO",cn:"客户交易统计信息表",cols:[["STATI_ID","统计分析记录ID","CHAR(20)"],["PARTY_ID","参与人ID","CHAR(20)"],["STAT_DATE","统计日期","CHAR(8)"],["STAT_ORG","统计机构号","CHAR(9)"],["BUSINESS_TYPE_CODE","业务种类代码","VARCHAR2(20)"],["PRODUCT_NO","产品编号","VARCHAR2(20)"]]},
  {x:850,y:168,w:327,name:"DW_CUST_STAT_DAY_INFO",cn:"客户数量日统计",cols:[["CUST_TYPE","客户类型","VARCHAR2(2)"],["CUST_NUMS","客户数量","NUMBER(38)"],["STAT_DATE","统计日期","VARCHAR2(8)"],...created]},
  {x:850,y:410,w:328,name:"DW_CORP_TLOG",cn:"对公交易日志表",cols:[["TRANS_ID","流水号","VARCHAR2(10)"],["BUSINESS_TYPE_CODE","业务种类","VARCHAR2(20)"],["PARTNER_NO","客户编号","VARCHAR2(20)"],["TRANSF_ORG","机构","VARCHAR2(10)"],["TRANS_TELLER","柜员","VARCHAR2(10)"],["TRANSF_TIME","时间","TIMESTAMP(6)"],["ACCOUNT_NO","交易账号","VARCHAR2(30)"],["ACCOUNT_NA","账户名称","VARCHAR2(40)"],["AMOUNT","金额","NUMBER(18,2)"],["SERIAL_NUM","交易序列号","VARCHAR2(30)"]]}
];
const mark = '<svg class="collapse-mark" width="13" height="13"><rect x=".5" y=".5" width="12" height="12" rx="2" fill="#fff" stroke="#7f9cc4"/><path d="M3.500 6l3-3 3 3M3.500 10l3-3 3 3" fill="none" stroke="#485c96" stroke-width="1.300"/></svg>';
document.getElementById("stage").insertAdjacentHTML("afterbegin", entities.map(e =>
  `<article class="entity${e.chosen ? " chosen" : ""}" style="left:${e.x}px;top:${e.y}px;width:${e.w}px"><h6>${e.name} <span class="cn">&nbsp;(${e.cn})</span></h6><div class="keys"></div><ul>${
    e.cols.map(c => `<li>${c[0]} <span class="cn"> (${c[1]})</span> : ${c[2]}</li>`).join("")}</ul>${e.chosen ? mark : ""}</article>`).join(""));
</script>
</body>
</html>
